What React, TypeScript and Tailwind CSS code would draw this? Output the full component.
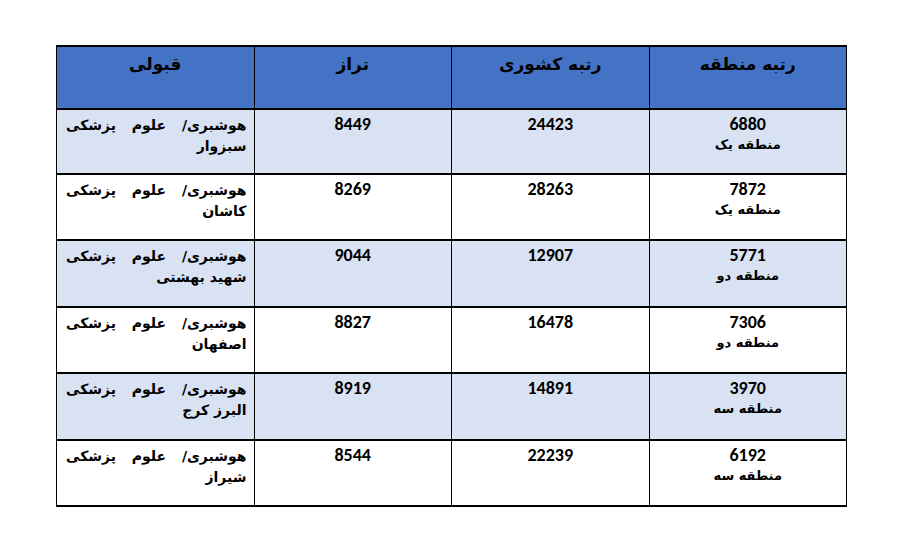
import React from 'react';

type Row = { rank: string; region: string; national: string; score: string; city: string; h: string };

const rows: Row[] = [
  { rank: '6880', region: 'منطقه یک', national: '24423', score: '8449', city: 'سبزوار', h: 'h-[65px]' },
  { rank: '7872', region: 'منطقه یک', national: '28263', score: '8269', city: 'کاشان', h: 'h-[66px]' },
  { rank: '5771', region: 'منطقه دو', national: '12907', score: '9044', city: 'شهید بهشتی', h: 'h-[67px]' },
  { rank: '7306', region: 'منطقه دو', national: '16478', score: '8827', city: 'اصفهان', h: 'h-[66px]' },
  { rank: '3970', region: 'منطقه سه', national: '14891', score: '8919', city: 'البرز کرج', h: 'h-[67px]' },
  { rank: '6192', region: 'منطقه سه', national: '22239', score: '8544', city: 'شیراز', h: 'h-[66px]' },
];

const headers = ['رتبه منطقه', 'رتبه کشوری', 'تراز', 'قبولی'];

const numFont = { fontFamily: 'Carlito, Lato, "Open Sans", sans-serif' };

export default function App() {
  return (
    <div className="w-[907px] h-[547px] bg-white pt-[45px] pl-[56px]">
      <table
        dir="rtl"
        className="w-[791px] border-collapse table-fixed text-black"
        style={{ fontFamily: '"DejaVu Sans", "Liberation Sans", sans-serif' }}
      >
        <thead>
          <tr className="h-[63px] bg-[#4472c4]">
            {headers.map((h) => (
              <th
                key={h}
                className="border-x border-t-2 border-b-2 border-black align-top pt-[6px] text-[17px] font-bold leading-[22px]"
              >
                {h}
              </th>
            ))}
          </tr>
        </thead>
        <tbody>
          {rows.map((r, i) => (
            <tr key={r.rank} className={`${r.h} ${i % 2 === 0 ? 'bg-[#d9e2f3]' : 'bg-white'}`}>
              <td className="border-x border-y-2 border-black align-top text-center pt-[4px]">
                <div className="text-[18px] font-bold leading-[20px]" style={numFont}>{r.rank}</div>
                <div className="text-[13px] font-bold leading-[21px]">{r.region}</div>
              </td>
              <td className="border-x border-y-2 border-black align-top text-center pt-[4px]">
                <div className="text-[18px] font-bold leading-[20px]" style={numFont}>{r.national}</div>
              </td>
              <td className="border-x border-y-2 border-black align-top text-center pt-[4px]">
                <div className="text-[18px] font-bold leading-[20px]" style={numFont}>{r.score}</div>
              </td>
              <td className="border-x border-y-2 border-black align-top pt-[5px] pr-[7px] pl-[9px]">
                <div className="flex justify-between text-[14px] font-bold leading-[21px]">
                  <span>هوشبری/</span>
                  <span>علوم</span>
                  <span>پزشکی</span>
                </div>
                <div className="text-right text-[14px] font-bold leading-[21px]">{r.city}</div>
              </td>
            </tr>
          ))}
        </tbody>
      </table>
    </div>
  );
}
